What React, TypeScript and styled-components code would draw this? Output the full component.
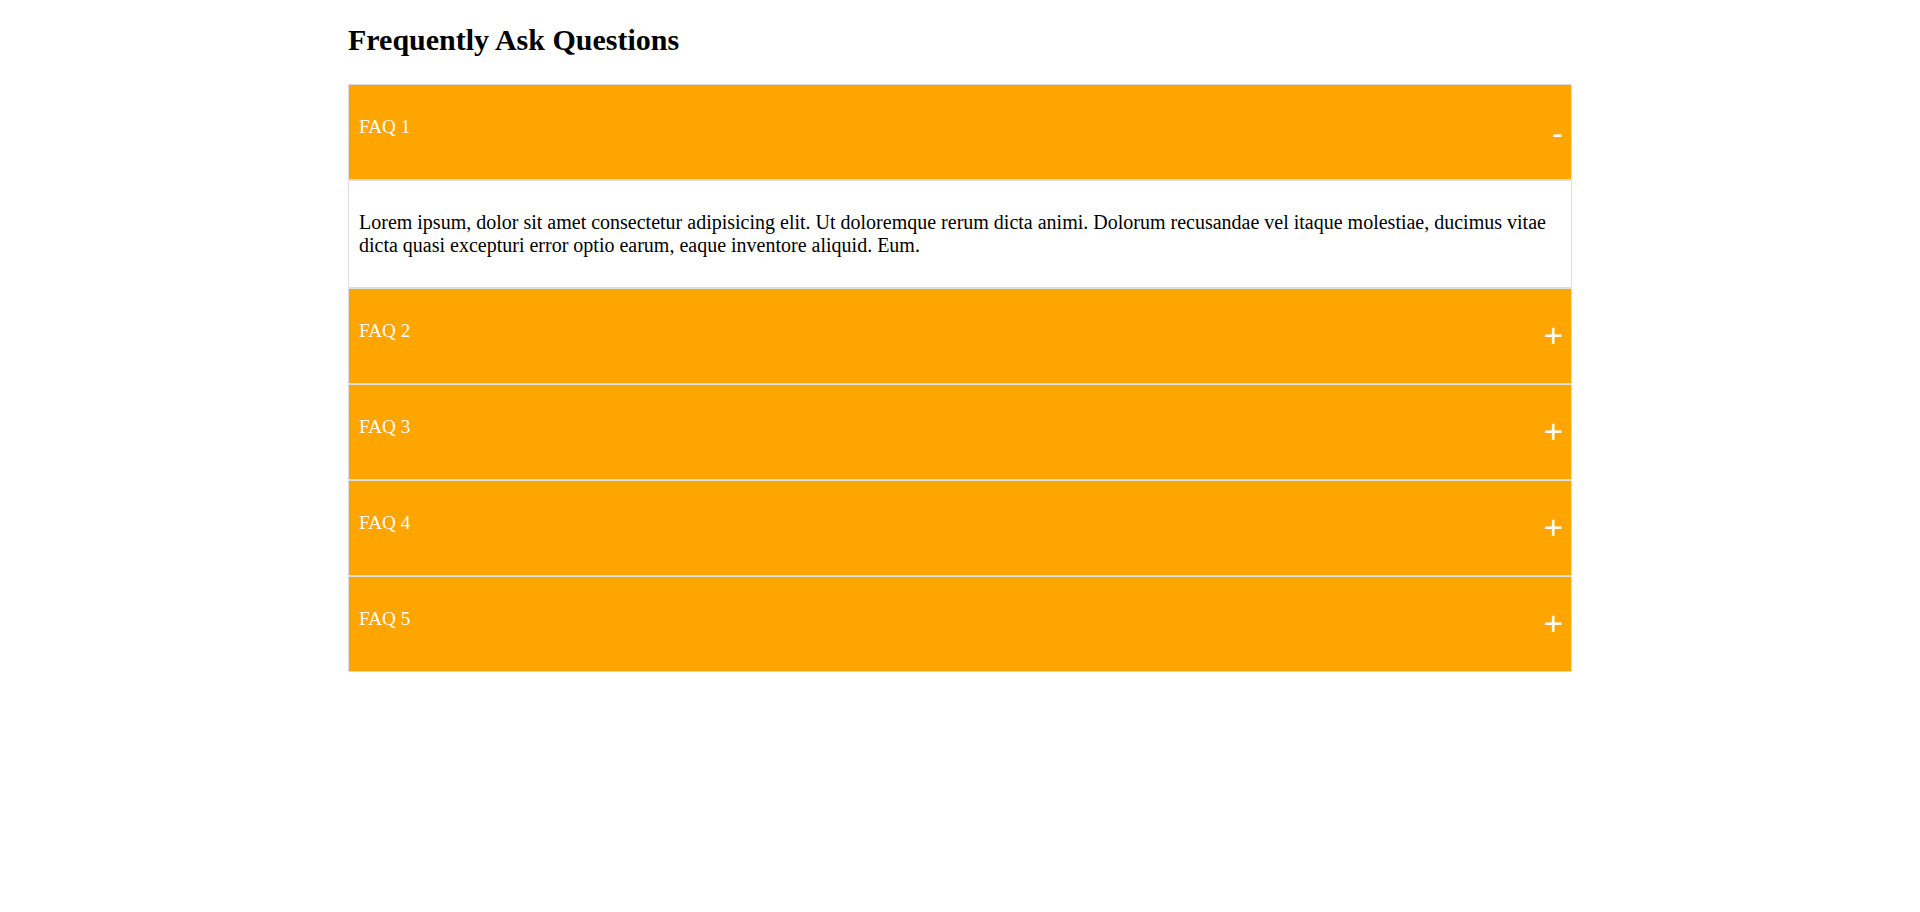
import { useState } from "react";
import styled, { createGlobalStyle } from "styled-components";

const GlobalStyle = createGlobalStyle`
  body {
    margin: 0;
    background-color: #ffffff;
    font-family: "Liberation Serif", "Times New Roman", serif;
  }
`;

const Wrapper = styled.div`
  width: 1224px;
  margin: 0 auto;
  padding-top: 23px;
`;
const Title = styled.h1`
  margin: 0 0 26px;
  font-size: 30px;
  line-height: 34.5px;
  font-weight: bold;
  color: #000000;
`;
const List = styled.div`
  display: flex;
  flex-direction: column;
`;
const Item = styled.div`
  & + & > div:first-child {
    border-top: 1px solid #dddddd;
  }
`;
const Header = styled.div`
  display: flex;
  justify-content: space-between;
  align-items: center;
  height: 94px;
  padding: 0 8px 0 10px;
  border: 1px solid #dddddd;
  background-color: #ffa500;
  color: #ffffff;
  cursor: pointer;
`;
const Label = styled.span`
  font-size: 19.2px;
  line-height: 22px;
  margin-bottom: 9px;
`;
const Icon = styled.span<{ $open: boolean }>`
  font-family: "Liberation Sans", Arial, sans-serif;
  font-size: 33px;
  line-height: 33px;
  margin-top: ${(props) => (props.$open ? "3px" : "0px")};
`;
const Content = styled.div`
  padding: 30px 10px;
  border: 1px solid #dddddd;
  font-size: 20px;
  line-height: 23px;
  color: #000000;
`;

const faqs = [
  {
    id: 1,
    question: "FAQ 1",
    answer:
      "Lorem ipsum, dolor sit amet consectetur adipisicing elit. Ut doloremque rerum dicta animi. Dolorum recusandae vel itaque molestiae, ducimus vitae dicta quasi excepturi error optio earum, eaque inventore aliquid. Eum.",
  },
  {
    id: 2,
    question: "FAQ 2",
    answer:
      "Lorem ipsum, dolor sit amet consectetur adipisicing elit. Ut doloremque rerum dicta animi.",
  },
  {
    id: 3,
    question: "FAQ 3",
    answer:
      "Lorem ipsum, dolor sit amet consectetur adipisicing elit. Ut doloremque rerum dicta animi.",
  },
  {
    id: 4,
    question: "FAQ 4",
    answer:
      "Lorem ipsum, dolor sit amet consectetur adipisicing elit. Ut doloremque rerum dicta animi.",
  },
  {
    id: 5,
    question: "FAQ 5",
    answer:
      "Lorem ipsum, dolor sit amet consectetur adipisicing elit. Ut doloremque rerum dicta animi.",
  },
];

const App = () => {
  const [openId, setOpenId] = useState<number | null>(1);
  const onToggle = (id: number) =>
    setOpenId((prev) => (prev === id ? null : id));

  return (
    <>
      <GlobalStyle />
      <Wrapper>
        <Title>Frequently Ask Questions</Title>
        <List>
          {faqs.map((faq) => {
            const open = openId === faq.id;
            return (
              <Item key={faq.id}>
                <Header onClick={() => onToggle(faq.id)}>
                  <Label>{faq.question}</Label>
                  <Icon $open={open}>{open ? "-" : "+"}</Icon>
                </Header>
                {open && <Content>{faq.answer}</Content>}
              </Item>
            );
          })}
        </List>
      </Wrapper>
    </>
  );
};

export default App;
